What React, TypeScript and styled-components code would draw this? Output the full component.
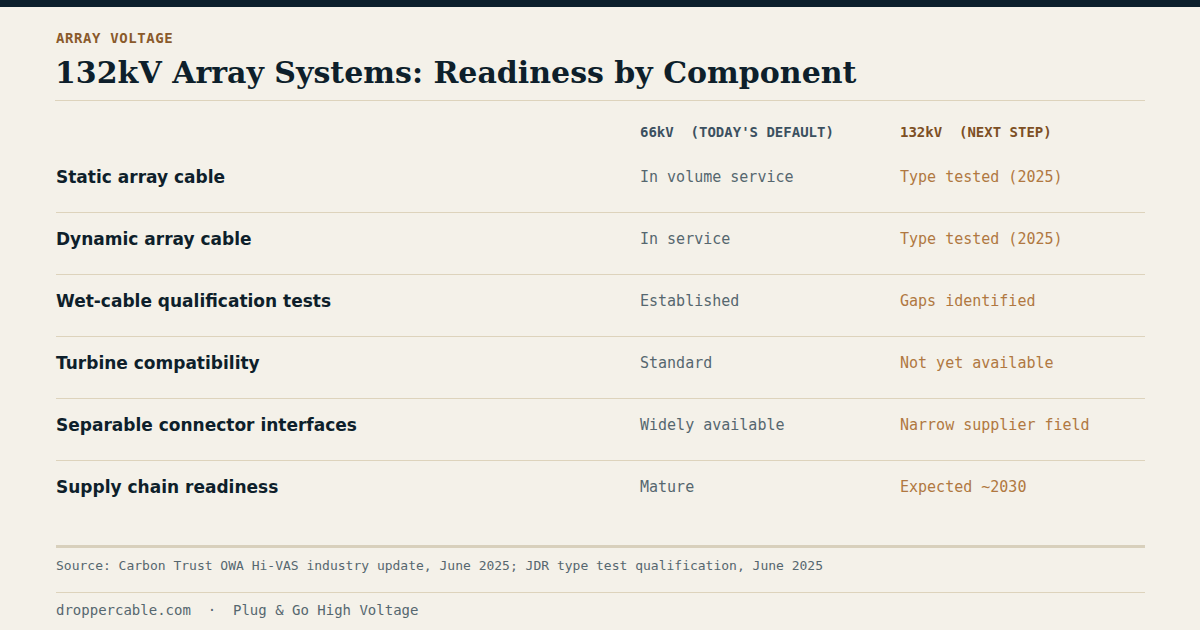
import React from "react";
import styled, { createGlobalStyle } from "styled-components";

const Global = createGlobalStyle`
  html, body { margin: 0; padding: 0; background: #f4f1e9; }
  body { width: 1200px; height: 630px; overflow: hidden; }
`;

const Page = styled.div`
  width: 1200px;
  height: 630px;
  box-sizing: border-box;
  background: #f4f1e9;
  border-top: 7px solid #0c1f2c;
  display: flex;
  flex-direction: column;
`;

const Inner = styled.div`
  padding: 0 55px 0 56px;
  display: flex;
  flex-direction: column;
`;

const Eyebrow = styled.div`
  margin-top: 23px;
  font-family: "DejaVu Sans Mono", monospace;
  font-weight: bold;
  font-size: 14px;
  letter-spacing: 0.6px;
  line-height: 16px;
  color: #8a5a2b;
`;

const Title = styled.h1`
  margin: 9px 0 0 -1px;
  font-family: "DejaVu Serif", serif;
  font-weight: bold;
  font-size: 30px;
  line-height: 36px;
  color: #0e1f2b;
  padding-bottom: 9px;
  border-bottom: 1px solid #ddd3bc;
`;

const Grid = styled.div`
  display: grid;
  grid-template-columns: 584px 260px 1fr;
`;

const HeadRow = styled(Grid)`
  padding-top: 23px;
  line-height: 16px;
  align-items: center;
`;

const Head = styled.div<{ $next?: boolean }>`
  font-family: "DejaVu Sans Mono", monospace;
  font-weight: bold;
  font-size: 14px;
  white-space: pre;
  color: ${(p) => (p.$next ? "#7d4f24" : "#3b5060")};
`;

const Body = styled.div`
  margin-top: 11px;
`;

const Row = styled(Grid)<{ $last?: boolean }>`
  height: 62px;
  padding-top: 16px;
  line-height: 20px;
  align-items: start;
  border-bottom: ${(p) => (p.$last ? "none" : "1px solid #ddd3bc")};
  box-sizing: border-box;
`;

const Label = styled.div`
  font-family: "DejaVu Sans", sans-serif;
  font-weight: bold;
  font-size: 17px;
  color: #0e1f2b;
`;

const Cell = styled.div<{ $next?: boolean }>`
  font-family: "DejaVu Sans Mono", monospace;
  font-size: 15px;
  color: ${(p) => (p.$next ? "#b07841" : "#56676f")};
`;

const Source = styled.div`
  margin-top: 22px;
  border-top: 3px solid #d8d0bc;
  padding: 10px 0 0;
  height: 34px;
  font-family: "DejaVu Sans Mono", monospace;
  font-size: 13px;
  color: #56676f;
  border-bottom: 1px solid #ddd3bc;
`;

const Footer = styled.div`
  padding-top: 9px;
  font-family: "DejaVu Sans Mono", monospace;
  font-size: 14px;
  color: #56676f;
  white-space: pre;
`;

const rows: [string, string, string][] = [
  ["Static array cable", "In volume service", "Type tested (2025)"],
  ["Dynamic array cable", "In service", "Type tested (2025)"],
  ["Wet-cable qualification tests", "Established", "Gaps identified"],
  ["Turbine compatibility", "Standard", "Not yet available"],
  ["Separable connector interfaces", "Widely available", "Narrow supplier field"],
  ["Supply chain readiness", "Mature", "Expected ~2030"],
];

export default function App() {
  return (
    <>
      <Global />
      <Page>
        <Inner>
          <Eyebrow>ARRAY VOLTAGE</Eyebrow>
          <Title>132kV Array Systems: Readiness by Component</Title>
          <HeadRow>
            <div />
            <Head>66kV  (TODAY'S DEFAULT)</Head>
            <Head $next>132kV  (NEXT STEP)</Head>
          </HeadRow>
          <Body>
            {rows.map((r, i) => (
              <Row key={r[0]} $last={i === rows.length - 1}>
                <Label>{r[0]}</Label>
                <Cell>{r[1]}</Cell>
                <Cell $next>{r[2]}</Cell>
              </Row>
            ))}
          </Body>
          <Source>
            Source: Carbon Trust OWA Hi-VAS industry update, June 2025; JDR type test qualification, June 2025
          </Source>
          <Footer>droppercable.com  ·  Plug &amp; Go High Voltage</Footer>
        </Inner>
      </Page>
    </>
  );
}
